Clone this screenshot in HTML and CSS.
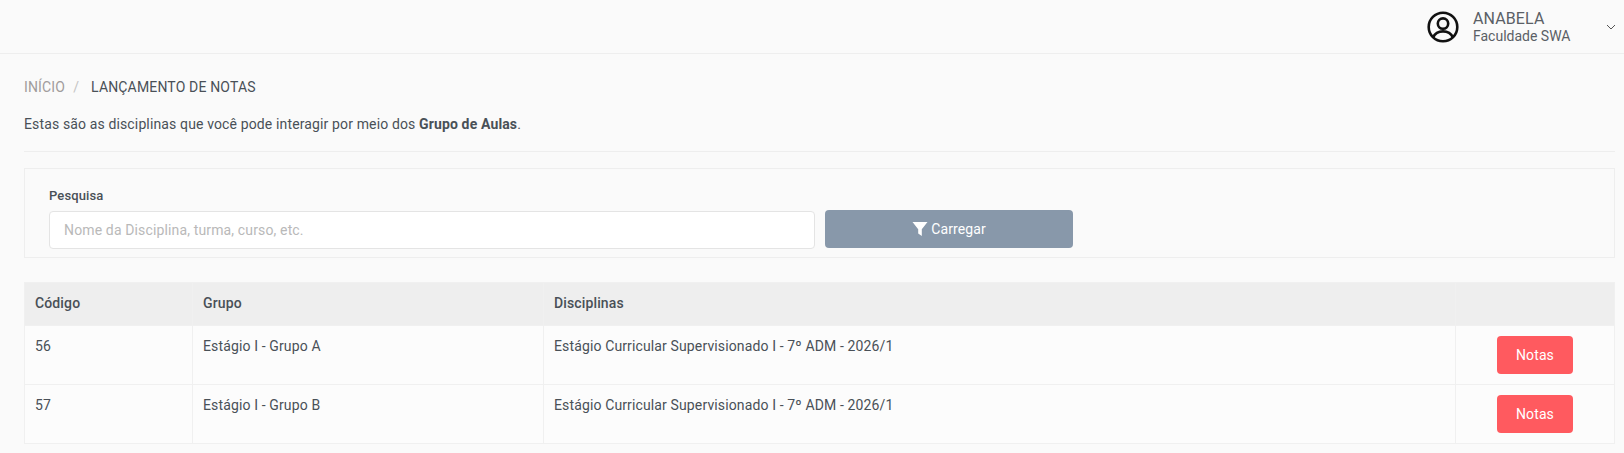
FILE: index.html
```html
<!DOCTYPE html>
<html lang="pt-BR">

<head>
    <meta charset="utf-8">
    <meta name="viewport" content="width=device-width, initial-scale=1.0">
    <title>Lançamento de Notas</title>
    <link rel="stylesheet" href="styles.css">
</head>

<body>

    <header class="topo">
        <div class="usuario">
            <svg class="avatar" viewBox="0 0 32 32" width="32" height="32" fill="none" stroke="#111" stroke-width="2.6">
                <circle cx="16" cy="16" r="14.3"></circle>
                <circle cx="16" cy="12.6" r="5.2"></circle>
                <path d="M6 26.6c2-4.4 5.800-6.200 10-6.200s8 1.800 10 6.200"></path>
            </svg>
            <div class="usuario-texto">
                <span class="usuario-nome">ANABELA</span>
                <span class="usuario-inst">Faculdade SWA</span>
            </div>
            <svg class="seta" viewBox="0 0 10 6" width="10" height="6" fill="none" stroke="#555" stroke-width="1">
                <path d="M1 1l4 4 4-4"></path>
            </svg>
        </div>
    </header>

    <main class="conteudo">
        <nav class="migalhas">
            <a href="#">INÍCIO</a>
            <span class="barra">/</span>
            <span class="atual">LANÇAMENTO DE NOTAS</span>
        </nav>

        <p class="intro">Estas são as disciplinas que você pode interagir por meio dos <b>Grupo de Aulas</b>.</p>

        <hr class="linha">

        <form class="pesquisa">
            <div class="campo">
                <label for="busca">Pesquisa</label>
                <input id="busca" type="text" placeholder="Nome da Disciplina, turma, curso, etc.">
            </div>
            <button type="button" class="carregar">
                <svg viewBox="0 0 16 16" width="16" height="16" fill="#fff">
                    <path d="M.5 1h15L9.800 8.200V15L6.200 12.600V8.200z"></path>
                </svg>
                Carregar
            </button>
        </form>

        <table class="tabela">
            <colgroup>
                <col class="col-codigo">
                <col class="col-grupo">
                <col>
                <col class="col-acao">
            </colgroup>
            <thead>
                <tr>
                    <th>Código</th>
                    <th>Grupo</th>
                    <th>Disciplinas</th>
                    <th></th>
                </tr>
            </thead>
            <tbody>
                <tr>
                    <td>56</td>
                    <td>Estágio I - Grupo A</td>
                    <td>Estágio Curricular Supervisionado I - 7º ADM - 2026/1</td>
                    <td class="acao"><button type="button" class="notas">Notas</button></td>
                </tr>
                <tr>
                    <td>57</td>
                    <td>Estágio I - Grupo B</td>
                    <td>Estágio Curricular Supervisionado I - 7º ADM - 2026/1</td>
                    <td class="acao"><button type="button" class="notas">Notas</button></td>
                </tr>
            </tbody>
        </table>
    </main>

</body>

</html>
```

FILE: styles.css
```css
* {
    box-sizing: border-box;
}

html {
    overflow: hidden;
}

body {
    margin: 0;
    background-color: #fafafa;
    color: #495057;
    font-family: Roboto, "Liberation Sans", sans-serif;
    font-size: 14px;
    letter-spacing: 0.11px;
    line-height: 21px;
}

.topo {
    display: flex;
    justify-content: flex-end;
    height: 54px;
    border-bottom: 1px solid #eeeeee;
}

.usuario {
    display: flex;
    align-items: center;
    padding-right: 8px;
}

.avatar {
    margin-right: 14px;
}

.usuario-texto {
    display: flex;
    flex-direction: column;
    width: 133px;
    color: #5a5f66;
}

.usuario-nome {
    font-size: 16px;
    line-height: 18px;
}

.usuario-inst {
    font-size: 14px;
    letter-spacing: 0;
    line-height: 16px;
}

.conteudo {
    padding: 23px 9px 0 24px;
}

.migalhas {
    display: flex;
    height: 21px;
    letter-spacing: 0.16px;
}

.migalhas a {
    color: #a19c9c;
    text-decoration: none;
}

.barra {
    margin: 0 12px 0 8px;
    color: #c4c4c4;
}

.intro {
    margin: 16px 0 0;
    letter-spacing: 0.135px;
}

.intro b {
    font-weight: 700;
}

.linha {
    margin: 16px 0;
    border: 0;
    border-top: 1px solid #eeeeee;
}

.pesquisa {
    display: flex;
    align-items: flex-end;
    gap: 10px;
    height: 90px;
    padding: 0 24px 8px;
    border: 1px solid #eeeeee;
}

.campo {
    display: flex;
    flex-direction: column;
    width: 766px;
}

.campo label {
    margin-bottom: 5px;
    font-size: 13px;
    font-weight: 500;
    line-height: 20px;
}

.campo input {
    height: 38px;
    padding: 0 14px;
    border: 1px solid #e4e4e4;
    border-radius: 4px;
    background-color: #ffffff;
    color: #495057;
    font-family: inherit;
    font-size: 14px;
    letter-spacing: 0.14px;
}

.campo input::placeholder {
    color: #b9b9b9;
    opacity: 1;
}

.carregar {
    display: flex;
    align-items: center;
    justify-content: center;
    gap: 3px;
    width: 248px;
    height: 38px;
    margin-bottom: 1px;
    border: none;
    border-radius: 4px;
    background-color: #8898aa;
    color: #ffffff;
    font-family: inherit;
    font-size: 14px;
    letter-spacing: 0.11px;
}

.tabela {
    width: 100%;
    margin-top: 24px;
    border-collapse: collapse;
    table-layout: fixed;
}

.col-codigo {
    width: 168px;
}

.col-grupo {
    width: 351px;
}

.col-acao {
    width: 159px;
}

.tabela th,
.tabela td {
    padding: 10px;
    border: 1px solid #f0f0f0;
    letter-spacing: 0.13px;
    text-align: left;
    vertical-align: top;
}

.tabela th {
    height: 43px;
    background-color: #eeeeee;
    font-weight: 500;
}

.tabela td {
    height: 59px;
    background-color: #fcfcfc;
}

.tabela td.acao {
    padding: 10px 0;
    text-align: center;
}

.notas {
    width: 76px;
    height: 38px;
    border: none;
    border-radius: 4px;
    background-color: #ff5a5f;
    color: #ffffff;
    font-family: inherit;
    font-size: 14px;
    letter-spacing: 0.11px;
}
```
